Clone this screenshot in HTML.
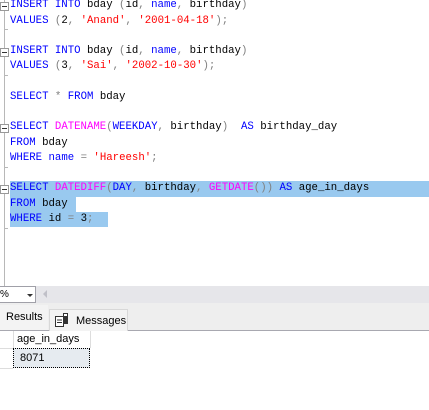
<!DOCTYPE html><html><head><style>
body{margin:0;width:429px;height:410px;overflow:hidden;background:#fff;position:relative;font-family:"Liberation Sans",sans-serif}
.ed{position:absolute;left:0;top:0;width:429px;height:286px;background:#fff;overflow:hidden}
.gl{position:absolute;left:4px;top:0;width:1px;height:286px;background:#b8b8b8}
.code{position:absolute;left:10px;top:-1.6px;font-family:"Liberation Mono",monospace;font-size:10.7px;line-height:15.25px;white-space:pre;color:#000}
.k{color:#0000ff}.s{color:#ff0000}.f{color:#ff00ff}.g{color:#808080}
.box{position:absolute;left:0;width:7px;height:7px;border:1px solid #999;background:#fff}
.box:after{content:"";position:absolute;left:1px;top:3px;width:5px;height:1px;background:#333}
.tick{position:absolute;left:4px;width:4px;height:1px;background:#b8b8b8}
</style></head><body>
<div class="ed">
<div class="gl"></div>
<div class="box" style="top:2px"></div><div class="tick" style="top:29px"></div>
<div class="box" style="top:48px"></div><div class="tick" style="top:75px"></div>
<div class="box" style="top:124px"></div><div class="tick" style="top:167px"></div>
<div class="box" style="top:185px"></div><div class="tick" style="top:228px"></div>
<div style="position:absolute;left:10px;top:181.4px;width:419px;height:15.25px;background:#99c9ef"></div>
<div style="position:absolute;left:10px;top:196.6px;width:66px;height:15.25px;background:#99c9ef"></div>
<div style="position:absolute;left:10px;top:211.9px;width:98px;height:15.25px;background:#99c9ef"></div>
<div class="code"><span class="k">INSERT INTO</span> bday <span class="g">(</span>id<span class="g">,</span> <span class="k">name</span><span class="g">,</span> birthday<span class="g">)</span>
<span class="k">VALUES</span> <span class="g">(</span>2<span class="g">,</span> <span class="s">'Anand'</span><span class="g">,</span> <span class="s">'2001-04-18'</span><span class="g">);</span>

<span class="k">INSERT INTO</span> bday <span class="g">(</span>id<span class="g">,</span> <span class="k">name</span><span class="g">,</span> birthday<span class="g">)</span>
<span class="k">VALUES</span> <span class="g">(</span>3<span class="g">,</span> <span class="s">'Sai'</span><span class="g">,</span> <span class="s">'2002-10-30'</span><span class="g">);</span>

<span class="k">SELECT</span> <span class="g">*</span> <span class="k">FROM</span> bday

<span class="k">SELECT</span> <span class="f">DATENAME</span><span class="g">(</span><span class="k">WEEKDAY</span><span class="g">,</span> birthday<span class="g">)</span>  <span class="k">AS</span> birthday_day
<span class="k">FROM</span> bday
<span class="k">WHERE</span> <span class="k">name</span> <span class="g">=</span> <span class="s">'Hareesh'</span><span class="g">;</span>

<span class="k">SELECT</span> <span class="f">DATEDIFF</span><span class="g">(</span><span class="k">DAY</span><span class="g">,</span> birthday<span class="g">,</span> <span class="f">GETDATE</span><span class="g">())</span> <span class="k">AS</span> age_in_days
<span class="k">FROM</span> bday
<span class="k">WHERE</span> id <span class="g">=</span> 3<span class="g">;</span></div>
</div>
<div style="position:absolute;left:0;top:286px;width:429px;height:17px;background:#e6e6ea"></div>
<div style="position:absolute;left:-1px;top:286px;width:35px;height:15px;background:#fff;border:1px solid #a0a0a8;font-size:10px;line-height:15px;color:#000">%</div>
<div style="position:absolute;left:27px;top:294px;width:0;height:0;border-left:3px solid transparent;border-right:3px solid transparent;border-top:3px solid #333"></div>
<div style="position:absolute;left:43px;top:290px;width:0;height:0;border-top:4px solid transparent;border-bottom:4px solid transparent;border-right:4px solid #c0c0c8"></div>
<div style="position:absolute;left:0;top:303px;width:429px;height:27px;background:#eeeeee"></div>
<div style="position:absolute;left:0;top:330px;width:429px;height:1px;background:#a8a8b0"></div>
<div style="position:absolute;left:0;top:305px;width:48px;height:25px;background:#f3f3f3;font-size:11px;line-height:25px;text-indent:6px">Results</div>
<div style="position:absolute;left:49px;top:309px;width:77px;height:21px;border:1px solid #d8d8d8;border-bottom:none;background:#f3f3f3;font-size:11px;line-height:22px">
<svg style="position:absolute;left:5px;top:3px" width="14" height="14" viewBox="0 0 14 14"><rect x="0.5" y="3.5" width="8" height="10" fill="#fff" stroke="#333"/><line x1="2" y1="7" x2="7" y2="7" stroke="#333"/><line x1="2" y1="9.5" x2="7" y2="9.5" stroke="#333"/><rect x="8" y="0" width="5" height="11" fill="#333"/><rect x="9" y="1" width="3" height="2" fill="#fff"/></svg>
<span style="position:absolute;left:26px">Messages</span></div>
<div style="position:absolute;left:0;top:348px;width:13px;height:1px;background:#ddd"></div>
<div style="position:absolute;left:0;top:368px;width:13px;height:1px;background:#ddd"></div>
<div style="position:absolute;left:13px;top:331px;width:1px;height:17px;background:#ddd"></div>
<div style="position:absolute;left:90px;top:331px;width:1px;height:17px;background:#ddd"></div>
<div style="position:absolute;left:17px;top:331px;font-size:11px;line-height:17px">age_in_days</div>
<div style="position:absolute;left:13px;top:348px;width:75px;height:18px;border:1px dotted #000;background:#e6ebf0;font-size:11px;line-height:18px;text-indent:6px">8071</div>
</body></html>
